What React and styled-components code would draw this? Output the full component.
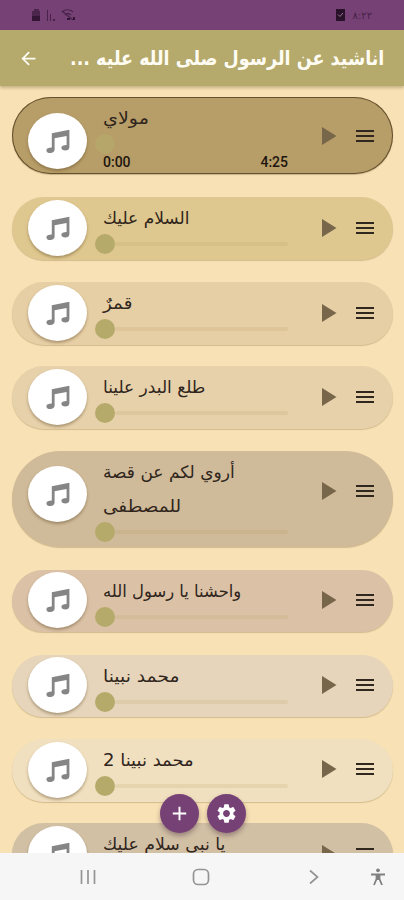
import React from "react";
import styled, { createGlobalStyle } from "styled-components";
import { MdAdd, MdArrowBack, MdSettings } from "react-icons/md";

const songs = [
  { title: ["مولاي"], widths: [46], color: "#b79d68", height: 77, art: 16, actions: 29, active: true, gap: 23 },
  { title: ["السلام عليك"], widths: [86], color: "#dfc88f", height: 63, gap: 22 },
  { title: ["قمرٌ"], widths: [29], color: "#e6cea5", height: 63, gap: 21 },
  { title: ["طلع البدر علينا"], widths: [102], color: "#e6d1ab", height: 63, gap: 22 },
  { title: ["أروي لكم عن قصة", "للمصطفى"], widths: [132, 78], color: "#cfba99", height: 96, art: 15, actions: 30, gap: 23 },
  { title: ["واحشنا يا رسول الله"], widths: [138], color: "#dbc2a6", height: 62, art: 2, actions: 20, gap: 23 },
  { title: ["محمد نبينا"], widths: [77], color: "#e6d5ba", height: 62, art: 2, actions: 20, gap: 22 },
  { title: ["محمد نبينا 2"], widths: [91], color: "#f1e0bf", height: 63, actions: 20, gap: 21 },
  { title: ["يا نبي سلام عليك"], widths: [122], color: "#d2c0a5", height: 63, gap: 22 },
];

// Scales a line of text so that it fills the width it is given
const FitText = ({ width, children }) => {
  const ref = React.useRef(null);
  React.useLayoutEffect(() => {
    const el = ref.current;
    el.style.transform = `scaleX(${width / el.offsetWidth})`;
  }, [width]);
  return <Fitted ref={ref}>{children}</Fitted>;
};

const MusicNotes = () => (
  <svg width="26" height="26" viewBox="0 0 26 26" fill="#858585">
    <path d="M6.8 5.2 L24.4 1.8 V19 C24.4 21.3 22.6 22.6 20.4 22.6 C18 22.6 16.4 21.5 16.4 19.8 C16.4 17.8 18.4 17 21.6 17 V8 L9.6 10.3 V21.8 C9.6 23.8 7.8 25 5.4 25 C3 25 1.4 24 1.4 22.4 C1.4 20.4 3.6 19.5 6.8 19.5 Z" />
  </svg>
);

const Song = ({ song }) => (
  <Card $color={song.color} $height={song.height} $gap={song.gap} $active={song.active}>
    <Art $top={song.art ?? 3}>
      <MusicNotes />
    </Art>
    <Info>
      {song.title.map((line, i) => (
        <Title key={line}>
          <FitText width={song.widths[i]}>{line}</FitText>
        </Title>
      ))}
      <Slider>
        <Thumb $active={song.active} />
        {!song.active && <Track />}
      </Slider>
      {song.active && (
        <Times>
          <span>0:00</span>
          <span>4:25</span>
        </Times>
      )}
    </Info>
    <Actions $top={song.actions ?? 21}>
      <svg width="16" height="20" viewBox="0 0 16 20">
        <path d="M1 1 L15.5 10 L1 19 Z" fill="#78664b" />
      </svg>
      <Burger>
        <i />
        <i />
        <i />
      </Burger>
    </Actions>
  </Card>
);

const App = () => {
  return (
    <Screen>
      <GlobalStyle />
      <StatusBar>
        <svg width="46" height="14" viewBox="0 0 46 14" fill="#351536">
          <path d="M3 1h5v2h1v10H1V3h2z" opacity=".65" />
          <path d="M1 8h8v5H1z" />
          <path d="M16 2h1v11h-1zM19 6h1v7h-1zM22 11h2v2h-2z" opacity=".7" />
          <path d="M31 3 L42 12 M31 4 C34 1 39 1 42 4 M34 7 C36 5 38 5 40 7" fill="none" stroke="#351536" strokeWidth="1.2" opacity=".7" />
          <path d="M36 10h3v2h-3zM42 9h2v3h-2z" />
        </svg>
        <Clock>
          <svg width="9" height="12" viewBox="0 0 9 12">
            <path d="M0 0h9v12H0z" fill="#281129" />
            <path d="M2 5.5 L4 7.5 L7 4" fill="none" stroke="#94738f" />
          </svg>
          <span>٨:٢٢</span>
        </Clock>
      </StatusBar>
      <Header>
        <MdArrowBack size={21} />
        <Heading>
          <FitText width={314}>اناشيد عن الرسول صلى الله عليه ...</FitText>
        </Heading>
      </Header>
      <List>
        {songs.map((song) => (
          <Song key={song.title[0]} song={song} />
        ))}
      </List>
      <Floating>
        <RoundButton>
          <MdAdd size={23} />
        </RoundButton>
        <RoundButton>
          <MdSettings size={23} />
        </RoundButton>
      </Floating>
      <NavBar>
        <svg width="16" height="16" viewBox="0 0 16 16">
          <path d="M1.5 1v14M8 1v14M14.5 1v14" stroke="#949494" strokeWidth="1.7" />
        </svg>
        <svg width="18" height="18" viewBox="0 0 18 18">
          <rect x="1.5" y="1.5" width="15" height="15" rx="4.5" fill="none" stroke="#949494" strokeWidth="1.7" />
        </svg>
        <svg width="10" height="16" viewBox="0 0 10 16">
          <path d="M1 1.5 L8.5 8 L1 14.5" fill="none" stroke="#949494" strokeWidth="1.7" />
        </svg>
        <svg width="16" height="18" viewBox="0 0 16 18">
          <circle cx="8" cy="2.3" r="1.9" fill="#808080" />
          <path d="M1 6.5 H15 M8 6 V11 M6.5 7 V11 L4 17 M9.5 7 V11 L12 17 M6.5 11 H9.5" fill="none" stroke="#808080" strokeWidth="1.8" />
        </svg>
      </NavBar>
    </Screen>
  );
};

const GlobalStyle = createGlobalStyle`
  * {
    box-sizing: border-box;
  }
  body {
    margin: 0;
    overflow: hidden;
  }
`;
const Screen = styled.div`
  position: relative;
  display: flex;
  flex-direction: column;
  width: 404px;
  height: 900px;
  overflow: hidden;
  background: #f8e2b5;
  font-family: "DejaVu Sans", sans-serif;
`;
const StatusBar = styled.div`
  display: flex;
  flex: 0 0 30px;
  align-items: center;
  justify-content: space-between;
  padding: 0 31px;
  background: #764276;
`;
const Clock = styled.div`
  display: flex;
  align-items: center;
  gap: 8px;
  margin-right: 1px;
  color: #482048;
  font-size: 10px;
`;
const Header = styled.header`
  z-index: 1;
  display: flex;
  flex: 0 0 56px;
  align-items: center;
  justify-content: space-between;
  padding: 0 20px 0 18px;
  background: #b5a96c;
  box-shadow: 0 2px 3px rgba(80, 65, 20, 0.3);
  color: #fffdf3;
`;
const Heading = styled.h1`
  width: 314px;
  margin: 0;
  direction: ltr;
  font-size: 20px;
  font-weight: bold;
  line-height: 40px;
`;
const Fitted = styled.span`
  display: inline-block;
  direction: rtl;
  white-space: nowrap;
  transform-origin: 0 50%;
`;
const List = styled.main`
  flex: 1;
  min-height: 0;
  padding: 11px 11px 0 12px;
  overflow: hidden;
`;
const Card = styled.section`
  display: grid;
  grid-template-columns: 59px 186px 1fr;
  align-items: start;
  column-gap: 16px;
  height: ${(p) => p.$height}px;
  margin-bottom: ${(p) => p.$gap}px;
  padding: 0 19px 0 16px;
  border-radius: 48px;
  background: ${(p) => p.$color};
  box-shadow: ${(p) =>
    p.$active
      ? "inset 0 0 0 1px #65502f, 0 1px 1px rgba(90, 65, 30, 0.3)"
      : "0 1px 1px rgba(125, 95, 50, 0.3)"};
`;
const Art = styled.div`
  display: flex;
  align-items: center;
  justify-content: center;
  height: 56px;
  margin-top: ${(p) => p.$top}px;
  border-radius: 50%;
  background: #fff;
  box-shadow: 0 2px 3px rgba(90, 70, 35, 0.42);
`;
const Info = styled.div`
  padding-top: 4px;
`;
const Title = styled.div`
  height: 34px;
  color: #2f251c;
  font-size: 17px;
  line-height: 35px;
`;
const Slider = styled.div`
  display: flex;
  align-items: center;
  height: 20px;
  margin: -1px 0 0 -8px;
`;
const Thumb = styled.div`
  width: 20px;
  height: 20px;
  border-radius: 50%;
  background: #b6aa6b;
  opacity: ${(p) => (p.$active ? 0.65 : 1)};
`;
const Track = styled.div`
  width: 173px;
  height: 4px;
  border-radius: 2px;
  background: rgba(175, 155, 96, 0.17);
`;
const Times = styled.div`
  display: flex;
  justify-content: space-between;
  padding-right: 1px;
  color: #1d160e;
  font-family: Roboto, sans-serif;
  font-size: 14px;
  font-weight: 500;
  line-height: 17px;
`;
const Actions = styled.div`
  display: flex;
  align-items: center;
  justify-content: space-between;
  margin: ${(p) => p.$top}px 0 0 16px;
`;
const Burger = styled.div`
  display: grid;
  gap: 3px;

  i {
    width: 18px;
    height: 2px;
    background: #30281f;
  }
`;
const Floating = styled.div`
  position: absolute;
  top: 794px;
  left: 160px;
  display: flex;
  gap: 8px;
`;
const RoundButton = styled.button`
  display: flex;
  align-items: center;
  justify-content: center;
  width: 39px;
  height: 39px;
  padding: 0;
  border: 0;
  border-radius: 50%;
  background: #764276;
  box-shadow: 0 3px 5px rgba(70, 40, 60, 0.4);
  color: #fff;
`;
const NavBar = styled.nav`
  z-index: 1;
  display: grid;
  flex: 0 0 47px;
  grid-template-columns: 112px 117px 61px 16px;
  align-items: center;
  padding-left: 80px;
  background: #f6f6f6;
`;

export default App;
